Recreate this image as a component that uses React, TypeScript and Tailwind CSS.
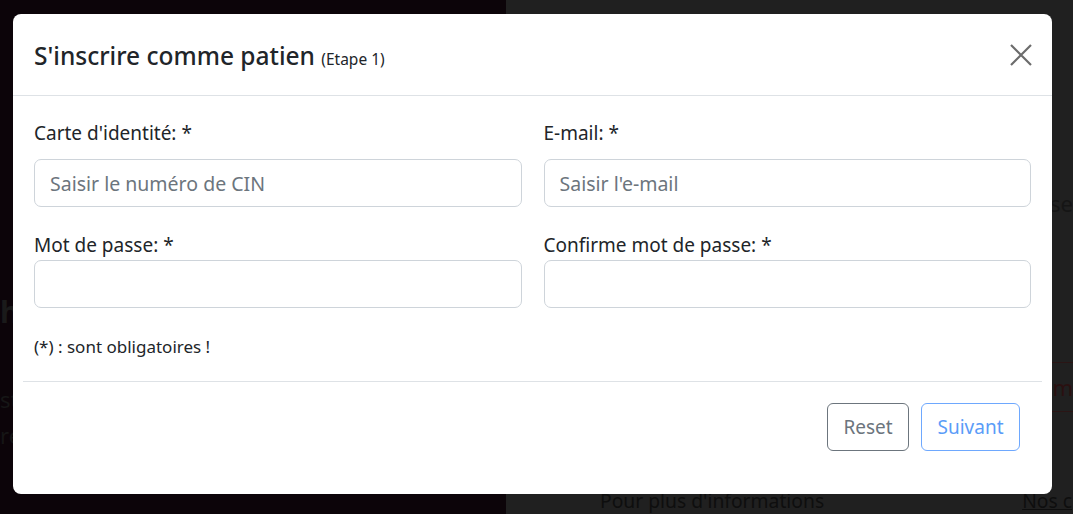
import React from "react";

export default function App() {
  const font = { fontFamily: '"Noto Sans", "Open Sans", sans-serif' };
  return (
    <div className="relative w-[1073px] h-[514px] overflow-hidden" style={font}>
      {/* background page (dimmed by backdrop) */}
      <div className="flex w-full h-full">
        <div className="w-[506px] shrink-0 h-full bg-[#0c0409] flex flex-col pt-[292px] text-[#1a1a1a] whitespace-nowrap">
          <div className="text-[30px] font-bold leading-[40px]">hi</div>
          <div className="text-[22px] leading-[30px] mt-[52px] text-[#161616]">st</div>
          <div className="text-[22px] leading-[30px] mt-[6px] text-[#161616]">re</div>
        </div>
        <div className="flex-1 min-w-0 h-full bg-[#202020] flex flex-col">
          <div className="h-[188px]" />
          <div className="flex justify-end text-[22px] leading-[30px] text-[#151515]">sse</div>
          <div className="h-[144px]" />
          <div className="h-[50px] border-y border-[#2a1515] flex justify-end items-center text-[22px] text-[#2a1010]">m</div>
          <div className="flex-1" />
          <div className="flex items-start h-[24px] whitespace-nowrap text-[19.3px] leading-[22px] text-[#0e0e0e]">
            <span className="ml-[94px]">Pour plus d'informations</span>
            <span className="ml-[198px] underline">Nos c</span>
          </div>
        </div>
      </div>

      {/* modal */}
      <div className="absolute left-[13px] top-[14px] w-[1039px] h-[480px] bg-white rounded-[8px] flex flex-col text-[#212529]">
        <div className="h-[82px] border-b border-[#dee2e6] flex items-center justify-between pl-[21px] pr-[20px] pt-[6px]">
          <h5 className="text-[24.5px] leading-[32px] font-medium">
            S'inscrire comme patien <span className="text-[15.5px] font-normal">(Etape 1)</span>
          </h5>
          <svg width="24" height="24" viewBox="0 0 24 24" className="mt-[-6px] mr-[-1px]">
            <path d="M2 2 L22 22 M22 2 L2 22" stroke="#6c6c6c" strokeWidth="2.2" />
          </svg>
        </div>
        <div className="px-[21px] pt-[24px]">
          <div className="grid grid-cols-2 gap-x-[22px]">
            <div>
              <label className="block text-[19px] leading-[26px]">Carte d'identité: *</label>
              <input
                placeholder="Saisir le numéro de CIN"
                className="mt-[13px] w-full h-[48px] border border-[#ced4da] rounded-[7px] px-[15px] text-[19.5px] placeholder:text-[#6c757d] outline-none"
              />
            </div>
            <div>
              <label className="block text-[19px] leading-[26px]">E-mail: *</label>
              <input
                placeholder="Saisir l'e-mail"
                className="mt-[13px] w-full h-[48px] border border-[#ced4da] rounded-[7px] px-[15px] text-[19.5px] placeholder:text-[#6c757d] outline-none"
              />
            </div>
            <div className="mt-[25px]">
              <label className="block text-[19px] leading-[26px]">Mot de passe: *</label>
              <input
                type="password"
                className="mt-[2px] w-full h-[48px] border border-[#ced4da] rounded-[7px] px-[15px] text-[19px] outline-none"
              />
            </div>
            <div className="mt-[25px]">
              <label className="block text-[19px] leading-[26px]">Confirme mot de passe: *</label>
              <input
                type="password"
                className="mt-[2px] w-full h-[48px] border border-[#ced4da] rounded-[7px] px-[15px] text-[19px] outline-none"
              />
            </div>
          </div>
          <p className="mt-[27px] text-[17px] leading-[24px]">(*) : sont obligatoires !</p>
        </div>
        <div className="mx-[10px] mt-[22px] border-t border-[#dee2e6]" />
        <div className="flex justify-end gap-[12px] pr-[32px] pt-[21px]">
          <button className="h-[48px] w-[82px] border border-[#6c757d] rounded-[6px] text-[#6c757d] text-[19px]">
            Reset
          </button>
          <button className="h-[48px] w-[99px] border border-[#6ea8fe] rounded-[6px] text-[#5a9cf8] text-[19px]">
            Suivant
          </button>
        </div>
      </div>
    </div>
  );
}
